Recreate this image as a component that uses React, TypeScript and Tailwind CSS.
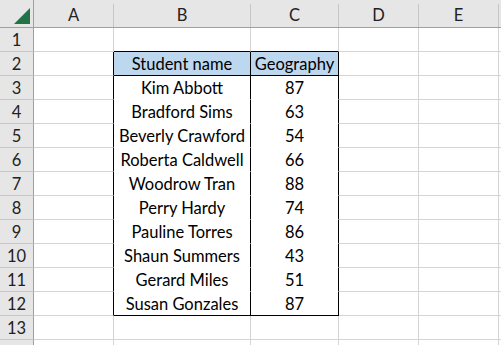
import React from "react";

const cols = ["A", "B", "C", "D", "E", ""];
const data: [string, string][] = [
  ["Kim Abbott", "87"],
  ["Bradford Sims", "63"],
  ["Beverly Crawford", "54"],
  ["Roberta Caldwell", "66"],
  ["Woodrow Tran", "88"],
  ["Perry Hardy", "74"],
  ["Pauline Torres", "86"],
  ["Shaun Summers", "43"],
  ["Gerard Miles", "51"],
  ["Susan Gonzales", "87"],
];

const font = { fontFamily: "Lato, 'Open Sans', sans-serif" };

function Cell({
  text,
  row,
  col,
}: {
  text?: string;
  row: number;
  col: number;
}) {
  const inTable = row >= 2 && row <= 12 && (col === 1 || col === 2);
  let right = "border-r-[#d4d4d4]";
  let bottom = "border-b-[#d4d4d4]";
  if (row >= 2 && row <= 12 && (col === 0 || col === 1 || col === 2)) right = "border-r-black";
  if ((row === 1 || row === 2 || row === 12) && (col === 1 || col === 2)) bottom = "border-b-black";
  else if (inTable) bottom = "border-b-white";
  const bg = row === 2 && inTable ? "bg-[#bdd7ee]" : "bg-white";
  return (
    <div
      className={`border-r border-b ${right} ${bottom} ${bg} flex items-end justify-center pb-[1px] text-[16.5px] leading-[20px] text-black whitespace-nowrap overflow-hidden`}
    >
      {text}
    </div>
  );
}

export default function App() {
  const rows = Array.from({ length: 14 }, (_, i) => i + 1);
  return (
    <div
      className="w-[501px] h-[345px] overflow-hidden bg-white"
      style={font}
    >
      <div className="grid grid-cols-[34px_80px_137px_88px_80px_80px_20px] grid-rows-[28px_repeat(14,24px)]">
        <div className="bg-[#e6e6e6] border-r border-b border-r-[#a0a0a0] border-b-[#a0a0a0] flex items-end justify-end pr-[3px] pb-[3px]">
          <svg width="16" height="16" viewBox="0 0 16 16">
            <polygon points="16,0 16,16 0,16" fill="#217346" />
          </svg>
        </div>
        {cols.map((c, i) => (
          <div
            key={c + i}
            className="bg-[#e6e6e6] border-b border-b-[#a0a0a0] pt-[4px] flex"
          >
            <div className="flex-1 border-r border-r-[#c6c6c6] flex items-center justify-center text-[16.5px] text-[#222]">
              {c}
            </div>
          </div>
        ))}
        {rows.map((r) => (
          <React.Fragment key={r}>
            <div className="bg-[#e6e6e6] border-r border-b border-r-[#a0a0a0] border-b-[#c6c6c6] flex items-center justify-center text-[16.5px] text-[#222] pt-[2px]">
              {r <= 13 ? r : ""}
            </div>
            {cols.map((_, ci) => {
              let text: string | undefined;
              if (r === 2 && ci === 1) text = "Student name";
              if (r === 2 && ci === 2) text = "Geography";
              if (r >= 3 && r <= 12 && ci === 1) text = data[r - 3][0];
              if (r >= 3 && r <= 12 && ci === 2) text = data[r - 3][1];
              return <Cell key={ci} row={r} col={ci} text={text} />;
            })}
          </React.Fragment>
        ))}
      </div>
    </div>
  );
}
